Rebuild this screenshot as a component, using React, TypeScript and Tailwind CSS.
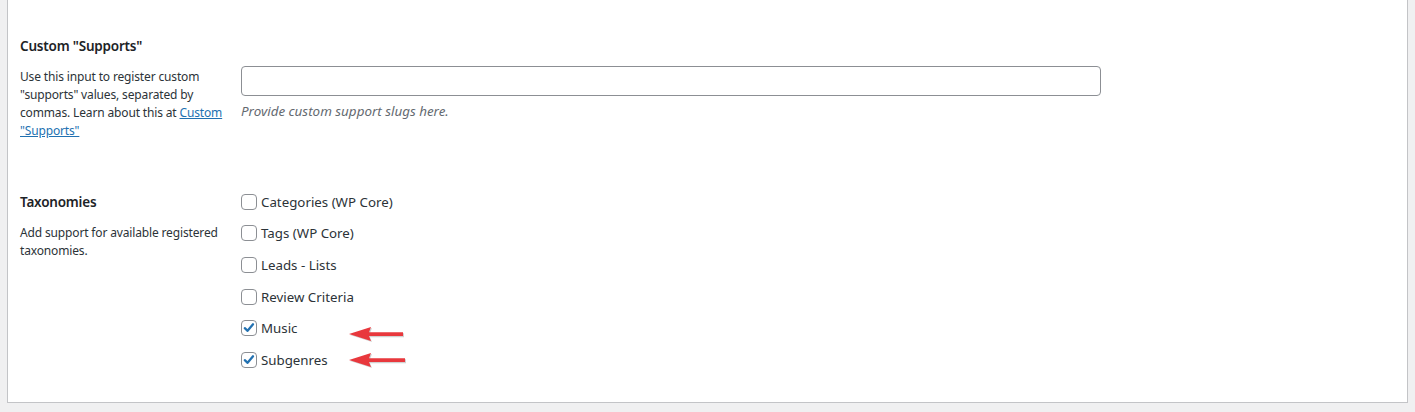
import React from "react";

type Tax = { label: string; checked: boolean };

const taxonomies: Tax[] = [
  { label: "Categories (WP Core)", checked: false },
  { label: "Tags (WP Core)", checked: false },
  { label: "Leads - Lists", checked: false },
  { label: "Review Criteria", checked: false },
  { label: "Music", checked: true },
  { label: "Subgenres", checked: true },
];

function Checkbox({ checked }: { checked: boolean }) {
  return (
    <span className="w-4 h-4 shrink-0 rounded-[4px] border border-[#8c8f94] bg-white flex items-center justify-center">
      {checked && (
        <svg viewBox="0 0 16 16" className="w-[14px] h-[14px]" aria-hidden="true">
          <path
            d="M3.2 8.2 L6.4 11.2 L12.6 3.8"
            fill="none"
            stroke="#2271b1"
            strokeWidth="2.6"
            strokeLinecap="round"
            strokeLinejoin="round"
          />
        </svg>
      )}
    </span>
  );
}

function RedArrow({ width }: { width: number }) {
  return (
    <svg width={width + 4} height="18" viewBox={`0 0 ${width + 4} 18`} aria-hidden="true">
      {/* soft shadow */}
      <path
        d={`M1 10 L23 3 L21 8.2 L${width + 1} 8.2 L${width + 1} 12.2 L21 12.2 L23 17 Z`}
        fill="#000"
        opacity="0.18"
      />
      <path
        d={`M0 9 L22 2 L20 7.2 L${width} 7.2 L${width} 11 L20 11 L22 16 Z`}
        fill="#e8383d"
      />
    </svg>
  );
}

export default function App() {
  return (
    <div
      className="min-h-[412px] bg-[#f0f0f1] text-[#3c434a]"
      style={{ fontFamily: '"Noto Sans", "Open Sans", sans-serif' }}
    >
      <div className="mx-[7px] h-[403px] bg-white border-x border-b border-[#c3c4c7] px-[12px]">
        {/* Custom Supports */}
        <div className="flex pt-[36px]">
          <div className="w-[221px] shrink-0">
            <div className="text-[13.5px] leading-[20px] font-semibold text-[#1d2327] tracking-[-0.2px]">
              Custom "Supports"
            </div>
            <p className="mt-[12px] text-[12px] leading-[18px] text-[#2c3338] w-[206px] tracking-[-0.15px]">
              Use this input to register custom "supports" values, separated by commas. Learn about
              this at{" "}
              <a href="#" className="text-[#2271b1] underline">
                Custom "Supports"
              </a>
            </p>
          </div>
          <div className="pt-[30px]">
            <div className="w-[860px] h-[30px] rounded-[4px] border border-[#8c8f94] bg-white" />
            <p className="mt-[5px] text-[13.4px] leading-[20px] italic text-[#646970]">
              Provide custom support slugs here.
            </p>
          </div>
        </div>

        {/* Taxonomies */}
        <div className="flex mt-[52px]">
          <div className="w-[221px] shrink-0">
            <div className="text-[13.5px] leading-[20px] font-semibold text-[#1d2327] tracking-[-0.2px]">
              Taxonomies
            </div>
            <p className="mt-[12px] text-[12px] leading-[18px] text-[#2c3338] w-[206px] tracking-[-0.15px]">
              Add support for available registered taxonomies.
            </p>
          </div>
          <div className="relative -mt-[6px]">
            {taxonomies.map((t) => (
              <label
                key={t.label}
                className="h-[31.6px] flex items-center gap-[4px] text-[13.3px] text-[#2c3338]"
              >
                <Checkbox checked={t.checked} />
                <span className="leading-[20px]">{t.label}</span>
              </label>
            ))}
            <div className="absolute left-[108px] top-[139px]">
              <RedArrow width={54} />
            </div>
            <div className="absolute left-[108px] top-[165px]">
              <RedArrow width={56} />
            </div>
          </div>
        </div>
      </div>
    </div>
  );
}
